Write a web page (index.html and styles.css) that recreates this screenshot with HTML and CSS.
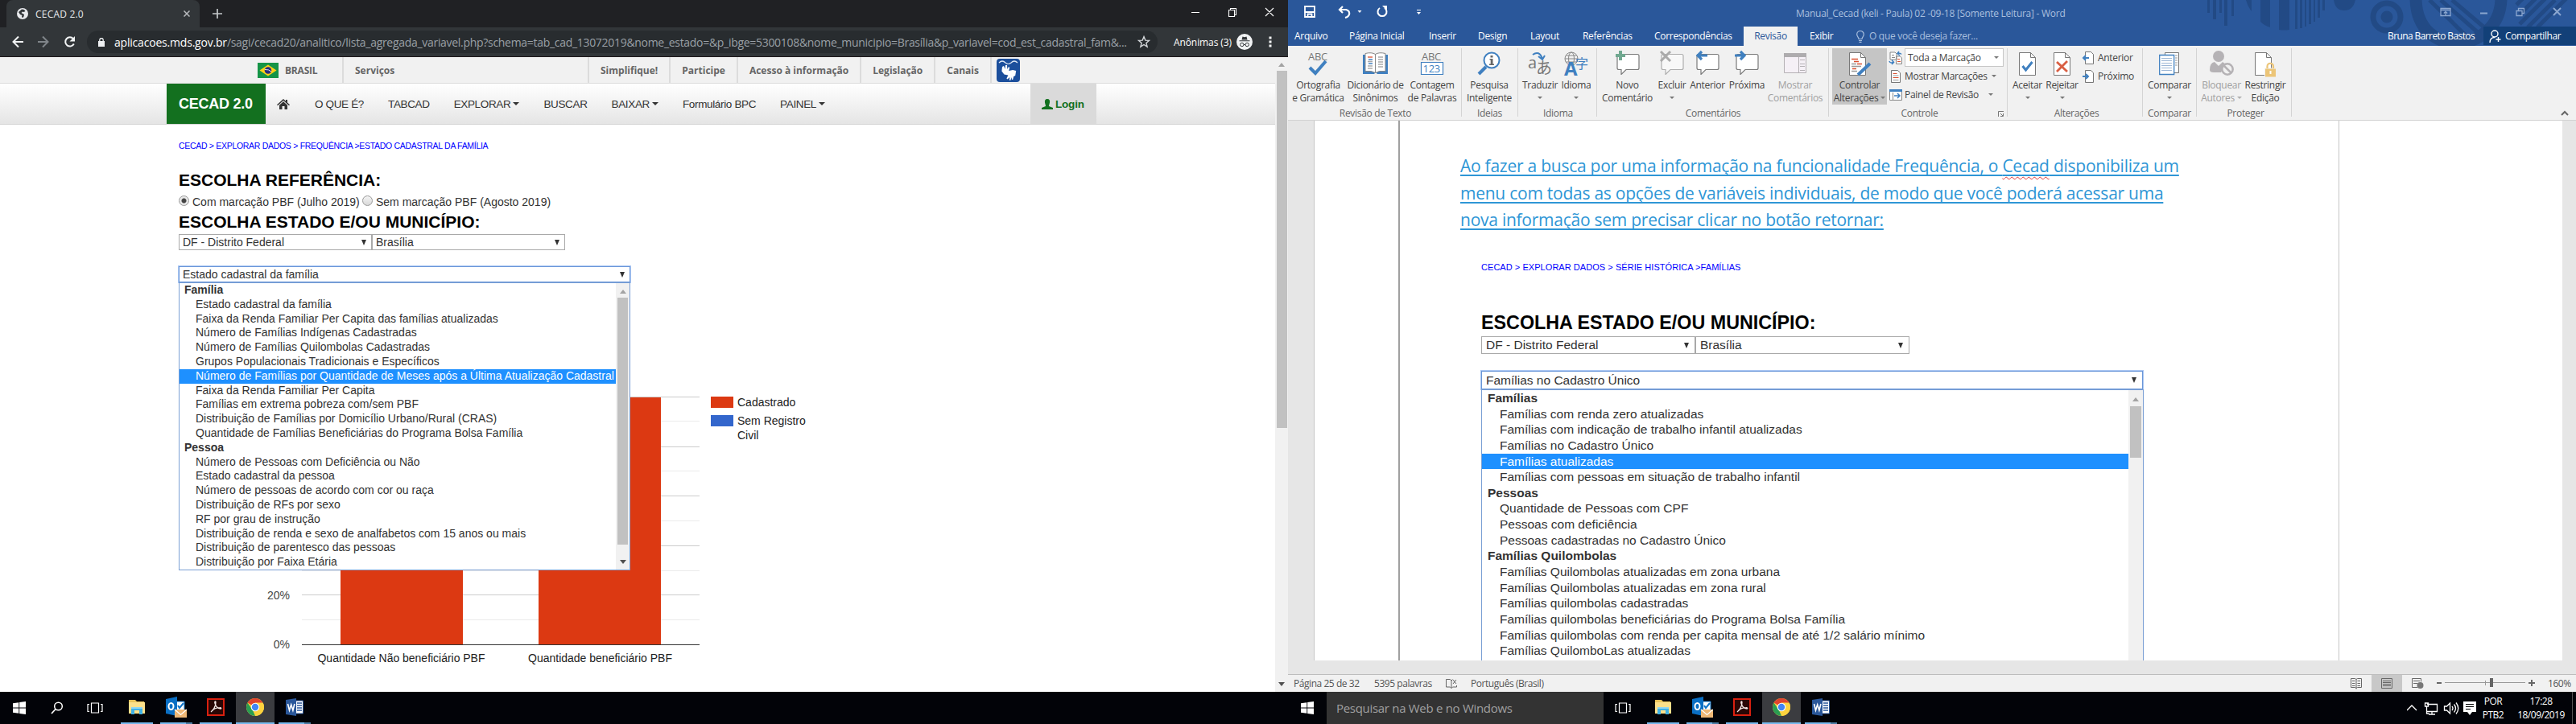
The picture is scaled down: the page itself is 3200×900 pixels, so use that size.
FILE: index.html
```html
<!DOCTYPE html>
<html lang="pt-BR">
<head>
<meta charset="utf-8">
<title>CECAD 2.0</title>
<link rel="stylesheet" href="styles.css">
</head>
<body>
<svg class="defs" width="0" height="0">
  <symbol id="i-win" viewBox="0 0 16 16"><path fill="#fff" d="M0 2.3 7.3 1.2V7.6H0zM8.2 1.1 16 0v7.6H8.2zM0 8.4h7.3v6.4L0 13.7zM8.2 8.4H16V16l-7.8-1.1z"/></symbol>
  <symbol id="i-task" viewBox="0 0 20 14"><path fill="none" stroke="#fff" stroke-width="1.2" d="M5.5 1h9v12h-9zM3 2.5H1v9h2M17 2.5h2v9h-2"/></symbol>
  <symbol id="i-folder" viewBox="0 0 22 20"><path fill="#e8c35a" d="M1 1h8l2 2h9v15H1z"/><path fill="#fbe08b" d="M1 4h20v14H1z"/><path fill="#3fb1e6" d="M4 10h14v9h-4v-5H8v5H4z"/><path fill="#8ed5f2" d="M4 10h14v2H4z"/></symbol>
  <symbol id="i-outlook" viewBox="0 0 26 26"><path fill="#fff" stroke="#0f74c8" d="M12 6h11v12H12z"/><path fill="none" stroke="#0f74c8" stroke-width="2" d="m15 11 2 3 5-6"/><path fill="#0a6fc4" d="M0 3 14 0v24L0 21z"/><ellipse cx="6.5" cy="12" rx="3" ry="4" fill="none" stroke="#fff" stroke-width="2"/><path fill="#efb876" d="M11 16h15v10H11z"/><path fill="none" stroke="#fff" stroke-width="1.2" d="m11 16 7.500 6.500L26 16"/></symbol>
  <symbol id="i-pdf" viewBox="0 0 22 22"><path fill="#2a0705" stroke="#d9200f" stroke-width="2" d="M1 1h20v20H1z"/><path fill="none" stroke="#f4e8e6" stroke-width="1.300" d="M5 17c3-2 6-7 6-12 0-1.500-1.500-1.500-1.200.5C10.500 9 13 13 17 13c1.500-.2.500-1.500-1-1.300-3 0-7 1.300-9.500 3.500"/></symbol>
  <symbol id="i-chrome" viewBox="0 0 22 22"><circle cx="11" cy="11" r="11" fill="#fdd23e"/><path fill="#e0442f" d="M11 11 1.500 5.500A11 11 0 0 1 20.500 5.500H11z"/><path fill="#2a9d52" d="M1.500 5.500 8 15l3 7A11 11 0 0 1 1.500 5.500z"/><path fill="#fdd23e" d="M11 22l5-8.500V6h4.800A11 11 0 0 1 11 22z"/><circle cx="11" cy="11" r="5.300" fill="#fff"/><circle cx="11" cy="11" r="4.200" fill="#4285f4"/></symbol>
  <symbol id="i-word" viewBox="0 0 22 22"><path fill="#fff" stroke="#2a579a" d="M12 3h9.500v16H12z"/><path stroke="#2a579a" stroke-width="1.300" d="M14 6h6M14 9h6M14 12h6M14 15h6"/><path fill="#2a579a" d="M0 2 13 0v22L0 20z"/><path fill="none" stroke="#fff" stroke-width="1.600" d="m2.500 7 2 8 2.200-7 2.200 7 2-8"/></symbol>
  <symbol id="i-page" viewBox="0 0 22 30"><path fill="#fff" stroke="#777" d="M.5.500h14l6 6v22H.5z"/><path fill="none" stroke="#777" d="M14.500.500v6h6"/></symbol>
  <symbol id="i-bubble" viewBox="0 0 30 30"><path fill="#fff" stroke="#7a7a7a" stroke-width="1.200" d="M4 4.500h23q2 0 2 2v15q0 2-2 2H13l-6 6v-6H4q-2 0-2-2v-15q0-2 2-2z"/></symbol>
</svg>

<div class="screen">
  <div class="tabs">
    <div class="tab">
      <svg width="14" height="14" viewBox="0 0 14 14"><circle cx="7" cy="7" r="7" fill="#e8eaed"/><path fill="#323639" d="M6 1.500 9 2l1.500 2-2 1L7 4.500 5.500 6 9 8l-.5 2.500L7 12.500 6 10.500 6.500 9 4 8 2 5z"/></svg>
      <span class="tab-title">CECAD 2.0</span>
      <svg width="8" height="8" viewBox="0 0 8 8"><path stroke="#b8bbbe" stroke-width="1.500" d="m.5.500 7 7m0-7-7 7"/></svg>
    </div>
    <svg class="plus" width="12" height="12" viewBox="0 0 12 12"><path stroke="#c4c7ca" stroke-width="1.700" d="M6 0v12M0 6h12"/></svg>
    <svg class="winctl" width="104" height="12" viewBox="0 0 104 12"><path fill="none" stroke="#fff" stroke-width="1.100" d="M0 6.500h10M46.500 3.500h7v8h-7zM48.500 3.500v-2h7v8h-2M92 1l10 10m0-10L92 11"/></svg>
  </div>
  <div class="toolbar">
    <svg class="navbtns" width="80" height="16" viewBox="0 0 80 16"><path fill="none" stroke="#f1f3f4" stroke-width="2" d="M14 8H1.500M8 1.500 1.500 8 8 14.500"/><path fill="none" stroke="#80858a" stroke-width="2" d="M32 8h12.500M38 1.500 44.500 8 38 14.500"/><path fill="none" stroke="#f1f3f4" stroke-width="2" d="M76 4.200A5.600 5.600 0 1 0 76.800 10.500"/><path fill="#f1f3f4" d="M78 1v6.500h-6.500z"/></svg>
    <div class="omnibox">
      <svg width="8" height="11" viewBox="0 0 8 11"><path fill="#eef0f2" d="M0 4h8v7H0z"/><path fill="none" stroke="#eef0f2" stroke-width="1.300" d="M1.800 5V2.700a2.200 2.200 0 0 1 4.400 0V5"/></svg>
      <span class="url"><b>aplicacoes.mds.gov.br</b><i>/sagi/cecad20/analitico/lista_agregada_variavel.php?schema=tab_cad_13072019&amp;nome_estado=&amp;p_ibge=5300108&amp;nome_municipio=Brasília&amp;p_variavel=cod_est_cadastral_fam&amp;...</i></span>
      <svg width="16" height="16" viewBox="0 0 16 16"><path fill="none" stroke="#d5d8db" stroke-width="1.400" d="m8 1.600 1.800 4.500 4.700.3-3.600 3 1.200 4.700L8 11.500l-4.100 2.600 1.200-4.700-3.600-3 4.700-.3z"/></svg>
    </div>
    <span class="anon">Anônimas (3)</span>
    <svg class="incog" width="20" height="20" viewBox="0 0 20 20"><circle cx="10" cy="10" r="10" fill="#f1f3f4"/><path fill="#323639" d="M6.500 7.500 7.500 3.500l2.500.7 2.500-.7 1 4zM3.500 8.300h13v1h-13z"/><path fill="none" stroke="#323639" d="M9 13.500h2"/><circle cx="6.800" cy="13.500" r="2.200" fill="none" stroke="#323639"/><circle cx="13.200" cy="13.500" r="2.200" fill="none" stroke="#323639"/></svg>
    <svg width="4" height="14" viewBox="0 0 4 14"><path fill="#f1f3f4" d="M.5.500h3v3h-3zM.5 5.500h3v3h-3zM.5 10.500h3v3h-3z"/></svg>
  </div>

  <div class="viewport">
    <div class="site">
      <div class="govbar">
        <span class="brasil"><svg width="26" height="19" viewBox="0 0 26 19"><path fill="#159447" d="M0 0h26v19H0z"/><path fill="#fdd216" d="m13 2.500 10.500 7L13 16.500 2.500 9.500z"/><circle cx="13" cy="9.500" r="4.300" fill="#2b2d7c"/><path fill="none" stroke="#dfe5f0" d="M9 8.500q5-.5 8 2.500"/></svg>BRASIL</span>
        <span class="servicos">Serviços</span>
        <span>Simplifique!</span><span>Participe</span><span>Acesso à informação</span><span>Legislação</span><span>Canais</span>
        <svg class="libras" width="29" height="29" viewBox="0 0 29 29"><rect width="29" height="29" rx="4" fill="#1c4f9c"/><path fill="none" stroke="#dfe8f5" stroke-width="1.200" d="M3 5q4-4 8 0 3.500 3 7 0 4-4 8 0"/><path fill="#fff" d="m7 10 2-1 1.500 4L11 8h2l.3 5 1.700-3 1.200 1-1 4 5-1 4 1-1 6-2 1-1 4h-1.300l-.2-3-1.500 4-1.400-.5.6-3.500-3 2.500-1-1 2-4-5-1-3-4z"/></svg>
      </div>
      <nav class="nav">
        <b class="brand">CECAD 2.0</b>
        <svg class="home" width="16" height="13" viewBox="0 0 16 13"><path fill="#333" d="m8 0 3 2.700V1h2v3.600L16 7.300l-1 1-7-6.300-7 6.300-1-1z"/><path fill="#333" d="m8 3.200 5 4.500V13H9.500V9h-3v4H3V7.700z"/></svg>
        <a>O QUE É?</a><a>TABCAD</a><a>EXPLORAR<i class="caret"></i></a><a>BUSCAR</a><a>BAIXAR<i class="caret"></i></a><a>Formulário BPC</a><a>PAINEL<i class="caret"></i></a>
        <b class="login"><svg width="14" height="13" viewBox="0 0 14 13"><path fill="#11701f" d="M7 0c2.500 0 3.500 2 3 4.500S9 8 9 9l5 2v2H0v-2l5-2c0-1-.5-2-1-4.500S4.500 0 7 0z"/></svg>Login</b>
      </nav>
      <main class="content">
        <p class="crumb">CECAD &gt; EXPLORAR DADOS &gt; FREQUÊNCIA &gt;ESTADO CADASTRAL DA FAMÍLIA</p>
        <h2 class="h-ref">ESCOLHA REFERÊNCIA:</h2>
        <div class="radios"><i class="radio on"></i><span class="r1">Com marcação PBF (Julho 2019)</span><i class="radio"></i><span>Sem marcação PBF (Agosto 2019)</span></div>
        <h2 class="h-est">ESCOLHA ESTADO E/OU MUNICÍPIO:</h2>
        <div class="selects"><div class="select">DF - Distrito Federal<i></i></div><div class="select">Brasília<i></i></div></div>
        <div class="combo">
          <div class="select focus">Estado cadastral da família<i></i></div>
          <div class="options">
            <ul>
              <li class="grp">Família</li>
              <li>Estado cadastral da família</li>
              <li>Faixa da Renda Familiar Per Capita das famílias atualizadas</li>
              <li>Número de Famílias Indígenas Cadastradas</li>
              <li>Número de Famílias Quilombolas Cadastradas</li>
              <li>Grupos Populacionais Tradicionais e Específicos</li>
              <li class="sel">Número de Famílias por Quantidade de Meses após a Última Atualização Cadastral</li>
              <li>Faixa da Renda Familiar Per Capita</li>
              <li>Famílias em extrema pobreza com/sem PBF</li>
              <li>Distribuição de Famílias por Domicílio Urbano/Rural (CRAS)</li>
              <li>Quantidade de Famílias Beneficiárias do Programa Bolsa Família</li>
              <li class="grp">Pessoa</li>
              <li>Número de Pessoas com Deficiência ou Não</li>
              <li>Estado cadastral da pessoa</li>
              <li>Número de pessoas de acordo com cor ou raça</li>
              <li>Distribuição de RFs por sexo</li>
              <li>RF por grau de instrução</li>
              <li>Distribuição de renda e sexo de analfabetos com 15 anos ou mais</li>
              <li>Distribuição de parentesco das pessoas</li>
              <li>Distribuição por Faixa Etária</li>
            </ul>
            <div class="sb"><i class="up"></i><b></b><i class="down"></i></div>
          </div>
        </div>
        <svg class="chart" width="820" height="360" viewBox="0 0 820 360">
          <path stroke="#ebebeb" d="M153 43.500h494M153 105.500h494M153 167.500h494M153 229.500h494M153 290.500h494"/>
          <path stroke="#ccc" d="M153 13.500h494M153 75.500h494M153 136.500h494M153 198.500h494M153 259.500h494"/>
          <path fill="#dc3912" d="M201 14h152v307H201zM447 14h152v307H447z"/>
          <path stroke="#333" d="M153 321.500h494"/>
          <g fill="#444" text-anchor="end"><text x="138" y="265">20%</text><text x="138" y="326">0%</text></g>
          <g fill="#222"><g text-anchor="middle"><text x="276.500" y="343" textLength="208">Quantidade Não beneficiário PBF</text><text x="523.500" y="343" textLength="179">Quantidade beneficiário PBF</text></g>
          <text x="694" y="25">Cadastrado</text><text x="694" y="48">Sem Registro</text><text x="694" y="66">Civil</text></g>
          <path fill="#dc3912" d="M661 13h28v14h-28z"/><path fill="#36c" d="M661 36h28v14h-28z"/>
        </svg>
      </main>
    </div>
    <div class="sb page-sb"><i class="up"></i><b></b><i class="down"></i></div>
  </div>

  <div class="taskbar">
    <span class="cell"><svg width="16" height="16"><use href="#i-win"/></svg></span>
    <span class="cell"><svg width="16" height="16" viewBox="0 0 16 16"><circle cx="9.500" cy="6" r="4.800" fill="none" stroke="#fff" stroke-width="1.500"/><path stroke="#fff" stroke-width="1.700" d="m6 9.500-5 5.500"/></svg></span>
    <span class="cell"><svg width="20" height="14"><use href="#i-task"/></svg></span>
    <div class="apps">
      <span class="app"><svg width="22" height="20"><use href="#i-folder"/></svg></span>
      <span class="app multi"><svg width="26" height="26"><use href="#i-outlook"/></svg></span>
      <span class="app"><svg width="22" height="22"><use href="#i-pdf"/></svg></span>
      <span class="app active"><svg width="22" height="22"><use href="#i-chrome"/></svg></span>
      <span class="app multi"><svg width="22" height="22"><use href="#i-word"/></svg></span>
    </div>
  </div>
</div>

<div class="screen word">
  <header class="title">
    <svg class="art" width="500" height="57" viewBox="0 0 500 57"><g fill="#224a85"><path d="M42 0h3v16h-3zM49 0h4v24h-4zM57 0h3v16h-3zM63 0h4v32h-4zM72 0h3v20h-3zM90 0h7v14q-5-6-7-14zM108 0h12v34q-7-2-12-7zM131 0h13v37q-7 1-13 0zM151 0h3v36h-3zM157 0h3v35h-3zM163 0h2v33h-2zM168 0h3v30h-3zM174 0h2v27h-2zM179 0h3v22h-3zM185 0h3v13h-3z"/><path d="M199 0h27q-3 13-14 13T199 0z"/><circle cx="265" cy="21" r="7.500"/></g><circle cx="265" cy="21" r="17" fill="none" stroke="#224a85" stroke-width="7"/><path fill="none" stroke="#224a85" stroke-width="15" d="M301-3c0 80 106 70 106 0"/><g stroke="#224a85" stroke-width="5"><path d="m318 0 51 50M332 0l48 42M346 0l40 34M426 6l8-8M430 18l20-20M430 30l32-32M440 34l34-34M452 34l36-36"/></g></svg>
    <div class="tl">
      <svg class="qat" width="150" height="16" viewBox="0 0 150 16"><path fill="none" stroke="#fff" stroke-width="1.800" d="M1 1h12v13H1zM1 8h12M4.500 14v-3.500h5V14"/><path fill="none" stroke="#fff" stroke-width="2.200" d="m48 1-4 4 4 4M44 5h8q5 1 4 6-1 3-5 4"/><path fill="#fff" d="M66.500 6h5L69 9z"/><path fill="none" stroke="#fff" stroke-width="2" d="M94 3a5.500 5.500 0 1 0 6 0"/><path fill="#fff" d="M97 0h6v6z"/><path fill="#fff" d="M140 5h5v1h-5zM140 8h5l-2.500 3z"/></svg>
      <span class="doc-title">Manual_Cecad (keli - Paula) 02 -09-18 [Somente Leitura] - Word</span>
      <svg class="wctl" width="152" height="12" viewBox="0 0 152 12"><g fill="none" stroke="#8ba6cf" stroke-width="1.300"><path d="M1 1.500h12v9H1zM1 3.500h12M7 10V5.500M4.800 7.500 7 5.300l2.200 2.200"/><path stroke-width="2" d="M50 7.500h9"/><path d="M95 4.500h7v6h-7zM97.500 4V1.500h7v6h-2"/><path stroke-width="2" d="m141 1 9 9m0-9-9 9"/></g></svg>
    </div>
    <div class="tabrow">
      <span class="t1">Arquivo</span><span class="t2">Página Inicial</span><span class="t3">Inserir</span><span class="t4">Design</span><span class="t5">Layout</span><span class="t6">Referências</span><span class="t7">Correspondências</span><b class="t8">Revisão</b><span class="t9">Exibir</span>
      <span class="tell"><svg width="10" height="15" viewBox="0 0 10 15"><path fill="none" stroke="#a9bfde" stroke-width="1.200" d="M3 10.500C3 8 .7 7.500.7 4.800a4.300 4.300 0 0 1 8.600 0C9.300 7.500 7 8 7 10.500zM3 12.500h4M3.500 14.300h3"/></svg>O que você deseja fazer...</span>
      <span class="user">Bruna Barreto Bastos</span>
      <span class="share"><svg width="16" height="16" viewBox="0 0 16 16"><g fill="none" stroke="#fff" stroke-width="1.400"><circle cx="7" cy="5" r="4"/><path d="M1 16c0-4 2-6.500 6-6.500M11.500 9v6M8.500 12h6"/></g></svg>Compartilhar</span>
    </div>
  </header>

  <div class="ribbon">
    <section class="g1"><div class="tools">
      <div class="btn w71"><svg width="30" height="32" viewBox="0 0 30 32"><text x="2" y="12" class="abc">ABC</text><path fill="none" stroke="#4080c0" stroke-width="4" d="m4 21 7 7L24 13"/></svg>Ortografia<br>e Gramática</div>
      <div class="btn w71"><svg width="32" height="32" viewBox="0 0 32 32"><path fill="#4080c0" d="M0 5h31v24H18l-2-2-2 2H0z"/><path fill="#fff" stroke="#888" d="M3 3.500q8-2 12.500 1 4.500-3 12.500-1v22q-8-1-12.500 2Q11 24.500 3 25.500zM15.500 4v23"/><path stroke="#d95030" stroke-width="1.300" d="M6 8h6"/><path stroke="#4080c0" stroke-width="1.300" d="M7 11h5M7 16h5"/><path stroke="#aaa" stroke-width="1.300" d="M6 13.500h6M6 19h6M6 22h6M19 8h6M19 11h6M19 14h6M19 17h6M19 20h6"/></svg>Dicionário de<br>Sinônimos</div>
      <div class="btn w70"><svg width="30" height="32" viewBox="0 0 30 32"><text x="2" y="12" class="abc">ABC</text><path fill="#fff" stroke="#4080c0" stroke-width="1.200" d="M1.500 14.500h27v15h-27z"/><text x="3.500" y="27" class="n123">123</text></svg>Contagem<br>de Palavras</div>
    </div><h4>Revisão de Texto</h4></section>
    <section class="g2"><div class="tools">
      <div class="btn w68"><svg width="30" height="32" viewBox="0 0 30 32"><path stroke="#4080c0" stroke-width="4" d="m2 29 9-9"/><circle cx="18" cy="12" r="9.500" fill="#fff" stroke="#4080c0" stroke-width="2"/><path fill="#666" d="M16.500 6h3v2.500h-3zM15.500 10h4v6.500h1.500v1.500h-6v-1.500h1.700v-5h-1.200z"/></svg>Pesquisa<br>Inteligente</div>
    </div><h4>Ideias</h4></section>
    <section class="g3"><div class="tools">
      <div class="btn w50"><svg width="30" height="32" viewBox="0 0 30 32"><text x="0" y="22" font-size="20" fill="#777">a</text><text x="10" y="29" class="cjk" font-size="20" fill="#777">あ</text><path fill="none" stroke="#4080c0" stroke-width="2" d="M6 5q8-6 12 5M13 7l5 4 3-5"/></svg>Traduzir<br><i class="dd"></i></div>
      <div class="btn w40"><svg width="32" height="32" viewBox="0 0 32 32"><g fill="none" stroke="#888"><circle cx="10" cy="10" r="8"/><ellipse cx="10" cy="10" rx="3.500" ry="8"/><path d="M2 10h16M3.500 6h13M3.500 14h13"/></g><text x="1" y="31" font-size="24" font-weight="bold" fill="#4080c0">A</text><text x="15" y="22" class="cjk" font-size="16" fill="#4080c0">字</text></svg>Idioma<br><i class="dd"></i></div>
    </div><h4>Idioma</h4></section>
    <section class="g4"><div class="tools">
      <div class="btn w73"><svg width="30" height="32"><use href="#i-bubble" width="30" height="30"/><path stroke="#70a890" stroke-width="4" d="M6 0v12M0 6h12"/></svg>Novo<br>Comentário</div>
      <div class="btn w38"><svg width="30" height="32"><g opacity=".55"><use href="#i-bubble" width="30" height="30"/></g><path stroke="#aaa" stroke-width="3" d="m1 1 12 12M13 1 1 13"/></svg>Excluir<br><i class="dd"></i></div>
      <div class="btn w50"><svg width="30" height="32"><use href="#i-bubble" width="30" height="30"/><path fill="none" stroke="#4080c0" stroke-width="3.200" d="M15 6H3M8 1 3 6l5 5"/></svg>Anterior</div>
      <div class="btn w48"><svg width="30" height="32"><use href="#i-bubble" width="30" height="30"/><path fill="none" stroke="#4080c0" stroke-width="3.200" d="M0 6h11M7 1l5 5-5 5"/></svg>Próxima</div>
      <div class="btn w72 off"><svg width="28" height="32" viewBox="0 0 28 32"><path fill="#f5f0f6" stroke="#b4b0b4" d="M.5 3.500h27v24H.5z"/><path fill="#aeacae" d="M0 3h28v5H0z"/><path stroke="#b4b0b4" d="M18.500 8v20M20 11.500h6M20 16.500h6M20 19.500h6M20 24.500h6"/></svg>Mostrar<br>Comentários</div>
    </div><h4>Comentários</h4></section>
    <section class="g5"><div class="tools">
      <div class="btn w68 pressed"><svg width="30" height="32" viewBox="-2 -2 30 32"><use href="#i-page" width="22" height="30"/><path stroke="#d95030" stroke-width="1.300" d="M3 8.500h8M6 11.500h6M10 14.500h6M4 20.500h5"/><path stroke="#999" stroke-width="1.300" d="M3 14.500h6M3 17.500h12M3 23.500h7"/><path stroke="#4080c0" stroke-width="4" d="M11 28 26 14"/></svg>Controlar<br>Alterações <i class="dd"></i></div>
      <div class="col">
        <div class="row"><svg width="16" height="16" viewBox="0 0 16 16"><path fill="#fff" stroke="#888" d="M1 1h6l2 2v7H1zM8.500 6h5l2 2v7.500h-7z"/><path stroke="#d95030" d="M10 9.500h3M10 12.500h4"/><path stroke="#888" d="M3 4.500h3M3 7.500h4"/><path fill="none" stroke="#4080c0" stroke-width="1.500" d="M15 3.500q-1-2-5-1M12 0l-2 2.500L13 5M0 12q1 3 5 1.500M3 10.500l2.500 3L3 16"/></svg><span class="dropbox">Toda a Marcação<i class="dd"></i></span></div>
        <div class="row"><svg width="16" height="16" viewBox="0 0 16 16"><path fill="#fff" stroke="#777" d="M2.500.500h8l3 3v12h-11z"/><path stroke="#d95030" d="M4.500 4.500h5M4.500 9.500h7"/><path stroke="#999" d="M4.500 7h7M4.500 12.500h7"/></svg>Mostrar Marcações<i class="dd m1"></i></div>
        <div class="row"><svg width="16" height="16" viewBox="0 0 16 16"><path fill="#fff" stroke="#888" d="M.5 1.500h15v13H.5z"/><path fill="#4080c0" d="M0 1h16v3H0z"/><path fill="none" stroke="#4080c0" stroke-width="1.500" d="M6 9h7M10 6l3 3-3 3"/><path stroke="#888" d="M4.500 5v9"/></svg>Painel de Revisão<i class="dd m2"></i></div>
      </div>
    </div><h4>Controle<svg class="launch" width="7" height="7" viewBox="0 0 7 7"><path fill="none" stroke="#777" d="M.5 7V.500H7M3 3l3 3M6.500 3v3.500H3"/></svg></h4></section>
    <section class="g6"><div class="tools">
      <div class="btn w41"><svg width="22" height="32" viewBox="0 -2 22 32"><use href="#i-page" width="22" height="30"/><path fill="none" stroke="#4080c0" stroke-width="3" d="m4.500 17 4 5 8-10"/></svg>Aceitar<br><i class="dd"></i></div>
      <div class="btn w45"><svg width="22" height="32" viewBox="0 -2 22 32"><use href="#i-page" width="22" height="30"/><path stroke="#d95e42" stroke-width="2.800" d="m4 12 13 12M17 11 4 24"/></svg>Rejeitar<br><i class="dd"></i></div>
      <div class="col nav-ch">
        <div class="row"><svg width="16" height="16" viewBox="0 0 16 16"><path fill="#fff" stroke="#777" d="M3.500.500h7l3 3v12h-10z"/><path fill="none" stroke="#4080c0" stroke-width="2" d="M8 8H1M4 5 1 8l3 3"/></svg>Anterior</div>
        <div class="row"><svg width="16" height="16" viewBox="0 0 16 16"><path fill="#fff" stroke="#777" d="M3.500.500h7l3 3v12h-10z"/><path fill="none" stroke="#4080c0" stroke-width="2" d="M0 8h7M4 5l3 3-3 3"/></svg>Próximo</div>
      </div>
    </div><h4>Alterações</h4></section>
    <section class="g7"><div class="tools">
      <div class="btn w64"><svg width="26" height="32" viewBox="0 0 26 32"><path fill="#fff" stroke="#777" d="M7.500 2.500h17v25h-17z"/><path stroke="#999" d="M20 6h3M20 9h3M20 12h3M20 15h3M20 18h3"/><path fill="#fff" stroke="#4080c0" stroke-width="1.300" d="M.7 5.500h18v24H.7z"/><path stroke="#9db7d6" d="M3 9.500h13M3 12.500h13M3 15.500h13M3 18.500h13M3 21.500h13M3 24.500h13"/></svg>Comparar<br><i class="dd"></i></div>
    </div><h4>Comparar</h4></section>
    <section class="g8"><div class="tools">
      <div class="btn w53 off"><svg width="30" height="32" viewBox="0 0 30 32"><circle cx="11" cy="7" r="7" fill="#b5b2b5"/><path fill="#b5b2b5" d="M0 24q0-9 6-10l5 5 5-5 4 3-6 10H5q-5 0-5-3z"/><circle cx="22" cy="23" r="6.700" fill="#f1f1f1" stroke="#b5b2b5" stroke-width="2.500"/><path stroke="#b5b2b5" stroke-width="2.500" d="m17 18 10 10"/></svg>Bloquear<br>Autores <i class="dd"></i></div>
      <div class="btn w56"><svg width="28" height="32" viewBox="-1 -2 28 32"><use href="#i-page" width="22" height="30"/><path fill="#ecc578" stroke="#f1f1f1" d="M12.500 20h14v11h-14z"/><path fill="none" stroke="#ecc578" stroke-width="2.200" d="M15.500 20v-2.500a3.700 3.700 0 0 1 7.500 0V20"/><path stroke="#fff" stroke-width="2" d="M19.500 23v4"/></svg>Restringir<br>Edição</div>
    </div><h4>Proteger</h4></section>
    <svg class="collapse" width="10" height="7" viewBox="0 0 10 7"><path fill="none" stroke="#666" stroke-width="2" d="m1 6 4-4 4 4"/></svg>
  </div>

  <div class="desk">
    <div class="paper">
      <div class="body">
        <p class="intro">Ao fazer a busca por uma informação na funcionalidade Frequência, o <span class="typo">Cecad</span> disponibiliza um<br>menu com todas as opções de variáveis individuais, de modo que você poderá acessar uma<br>nova informação sem precisar clicar no botão retornar:</p>
        <div class="shot">
          <p class="crumb">CECAD &gt; EXPLORAR DADOS &gt; SÉRIE HISTÓRICA &gt;FAMÍLIAS</p>
          <h2>ESCOLHA ESTADO E/OU MUNICÍPIO:</h2>
          <div class="selects"><div class="select">DF - Distrito Federal<i></i></div><div class="select">Brasília<i></i></div></div>
          <div class="select focus">Famílias no Cadastro Único<i></i></div>
          <div class="options">
            <ul>
              <li class="grp">Famílias</li>
              <li>Famílias com renda zero atualizadas</li>
              <li>Famílias com indicação de trabalho infantil atualizadas</li>
              <li>Famílias no Cadastro Único</li>
              <li class="sel">Famílias atualizadas</li>
              <li>Famílias com pessoas em situação de trabalho infantil</li>
              <li class="grp">Pessoas</li>
              <li>Quantidade de Pessoas com CPF</li>
              <li>Pessoas com deficiência</li>
              <li>Pessoas cadastradas no Cadastro Único</li>
              <li class="grp">Famílias Quilombolas</li>
              <li>Famílias Quilombolas atualizadas em zona urbana</li>
              <li>Famílias Quilombolas atualizadas em zona rural</li>
              <li>Famílias quilombolas cadastradas</li>
              <li>Famílias quilombolas beneficiárias do Programa Bolsa Família</li>
              <li>Famílias quilombolas com renda per capita mensal de até 1/2 salário mínimo</li>
              <li>Famílias QuilomboLas atualizadas</li>
            </ul>
            <div class="sb"><i class="up"></i><b></b></div>
          </div>
        </div>
      </div>
    </div>
  </div>

  <footer class="status">
    <span class="s1">Página 25 de 32</span><span class="s2">5395 palavras</span>
    <svg class="s3" width="14" height="13" viewBox="0 0 14 13"><path fill="none" stroke="#666" d="M7 12.500 5.500 11H.5V1.500h5L7 3l1.500-1.500M7 3v9.500L8.500 11h5V9M9 2l4 5m0-5L9 7"/></svg>
    <span class="s4">Português (Brasil)</span>
    <svg class="views" width="140" height="21" viewBox="0 0 140 21"><path fill="#c8c8c8" d="M36 0h38v21H36z"/><g fill="none" stroke="#666"><path d="M10.500 4.500h5l1.500 1 1.500-1h5v11h-5l-1.500 1-1.500-1h-5zM17 5.500v12M12 7.500h3.500M12 10.500h3.500M12 13.500h3.500M18.500 7.500H22M18.500 10.500H22M18.500 13.500H22"/><path d="M48.500 4.500h13v12h-13zM50 7.500h10M50 9.500h10M50 11.500h10M50 13.500h10"/><path d="M93 15.500h-6.500v-11h11v4M88 7.500h8M88 10.500h5"/></g><circle cx="96.500" cy="13" r="4" fill="#777"/><path stroke="#666" stroke-width="2" d="M117 10h6"/></svg>
    <svg class="zoomer" width="114" height="21" viewBox="0 0 114 21"><path stroke="#999" d="M1 9.500h100M51.500 7v6"/><path fill="#666" d="M57 4h4v11h-4z"/><path stroke="#666" stroke-width="2" d="M105 10h8M109 6v8"/></svg>
    <span class="pct">160%</span>
  </footer>

  <div class="taskbar">
    <span class="cell"><svg width="16" height="16"><use href="#i-win"/></svg></span>
    <span class="search">Pesquisar na Web e no Windows</span>
    <span class="cell tv"><svg width="20" height="14"><use href="#i-task"/></svg></span>
    <div class="apps">
      <span class="app"><svg width="22" height="20"><use href="#i-folder"/></svg></span>
      <span class="app multi"><svg width="26" height="26"><use href="#i-outlook"/></svg></span>
      <span class="app"><svg width="22" height="22"><use href="#i-pdf"/></svg></span>
      <span class="app active"><svg width="22" height="22"><use href="#i-chrome"/></svg></span>
      <span class="app multi"><svg width="22" height="22"><use href="#i-word"/></svg></span>
    </div>
    <div class="tray">
      <svg width="86" height="18" viewBox="0 0 86 18"><g fill="none" stroke="#fff" stroke-width="1.300"><path d="m0 12 6-6 6 6M25 4.500h12.500v9H25M31 13.500V17M27 17h8M22.500 3h4v4h-4zM24.500 7v9h3"/><path d="M46.500 7h3l4-4v13l-4-4h-3zM56 7q2 2.500 0 5M58.500 4.500q4 5 0 10M61 2.500q5.500 7 0 14"/></g><path fill="#fff" d="M70 1h16v13h-5l-3 4-3-4h-5z"/><path stroke="#000" d="M73 4.500h10M73 7.500h10M73 10.500h6"/></svg>
      <span class="lang">POR<br>PTB2</span><span class="clock">17:28<br>18/09/2019</span>
    </div>
  </div>
</div>
</body>
</html>
```
FILE: styles.css
```css
* { box-sizing: border-box; }
body, h2, h4, p, ul { margin: 0; padding: 0; }
ul { list-style: none; }
i { font-style: normal; }
svg { display: block; flex: none; }
body {
  display: flex;
  width: 3200px;
  height: 900px;
  overflow: hidden;
  background: #fff;
  white-space: nowrap;
  font-family: "Liberation Sans", Arial, sans-serif;
}
.defs { position: absolute; }
.screen { width: 1600px; height: 900px; display: flex; flex-direction: column; flex: none; }

/* browser chrome */
.tabs { height: 34px; background: #202124; display: flex; align-items: center; padding-left: 8px; color: #e8eaed; }
.tab { width: 240px; height: 34px; background: #323639; border-radius: 8px 8px 0 0; display: flex; align-items: center; padding: 0 12px 0 13px; }
.tab-title { flex: 1; padding-left: 9px; font: 12px "Open Sans", sans-serif; letter-spacing: .2px; }
.plus { margin-left: 16px; }
.winctl { margin: -5px 16px 0 auto; }
.toolbar { height: 37px; background: #323639; border-bottom: 1px solid #1d1719; display: flex; align-items: center; padding: 0 20px 0 15px; }
.navbtns { margin-right: 13px; }
.omnibox { width: 1330px; height: 28px; border-radius: 14px; background: #282c2f; display: flex; align-items: center; padding: 0 9px 0 14px; font: 14px "Open Sans", sans-serif; letter-spacing: -.3px; }
.url { flex: 1; padding-left: 12px; }
.url b { font-weight: 400; color: #fff; letter-spacing: -.2px; }
.url i { color: #9aa0a6; }
.anon { width: 98px; padding-left: 20px; color: #fff; font: 12px "Open Sans", sans-serif; letter-spacing: -.1px; }
.incog { margin-right: 20px; }

.viewport { height: 789px; display: flex; }
.site { width: 1584px; overflow: hidden; }
.sb { background: #f1f1f1; display: flex; flex-direction: column; align-items: center; }
.sb b { background: #c1c1c1; display: block; }
.sb i { border: 4px solid transparent; }
.sb .up { border-top: 0; border-bottom: 5px solid #a3a3a3; }
.sb .down { border-bottom: 0; border-top: 5px solid #505050; }
.page-sb { width: 16px; padding: 7px 0; }
.page-sb b { width: 13px; height: 444px; margin: 5px 0 auto; }

/* government bar */
.govbar { height: 33px; background: #f1f1f1; border-bottom: 1px solid #ddd; display: flex; align-items: center; padding-left: 320px; color: #666; font: bold 12px "Open Sans", sans-serif; letter-spacing: 0; }
.govbar span { height: 32px; display: flex; align-items: center; padding: 0 14px; border-right: 2px solid #dcdcdc; }
.govbar .brasil { width: 107px; padding: 0; gap: 8px; letter-spacing: -.2px; }
.govbar .servicos { width: 305px; }
.libras { margin-left: 6px; }

.nav { height: 51px; background: linear-gradient(#fff, #e5e5e5); border-bottom: 1px solid #d4d4d4; display: flex; align-items: center; padding-left: 207px; font-size: 13.500px; color: #333; }
.brand { width: 123px; height: 50px; line-height: 50px; padding-left: 15px; background: #13701f; color: #fff; font-size: 18px; letter-spacing: -.25px; }
.home { margin: 0 16px 0 14px; }
.nav a { padding: 0 15px; display: flex; align-items: center; letter-spacing: -.35px; }
.caret { border: 4px solid transparent; border-top-color: #333; border-bottom: 0; margin-left: 3px; }
.login { width: 82px; height: 50px; margin: 0 222px 0 auto; background: #dadada; color: #11701f; display: flex; align-items: center; padding-left: 14px; gap: 3px; letter-spacing: -.2px; }

/* form */
.content { padding: 16px 0 0 222px; color: #333; }
.crumb { height: 20px; line-height: 20px; color: #00f; font-size: 11px; }
.content .crumb { font-size: 10.500px; letter-spacing: -.3px; }
h2 { color: #000; font-weight: bold; font-size: 21px; height: 28px; line-height: 28px; }
.h-ref { margin-top: 19px; }
.h-est { margin-top: 1px; }
.radios { height: 20px; margin-top: 3px; display: flex; align-items: center; font-size: 14px; }
.radio { width: 13px; height: 13px; flex: none; border: 1px solid #999; border-radius: 50%; background: linear-gradient(#f4f4f4, #d8d8d8); margin: -3px 4px 0 0; }
.radio.on { background: radial-gradient(circle, #444 0 2.500px, #e8e8e8 3.500px); }
.r1 { width: 211px; }
.selects { display: flex; margin-top: 1px; }
.select { width: 240px; height: 20px; border: 1px solid #a9a9a9; background: #fff; display: flex; align-items: center; justify-content: space-between; padding: 0 6px 0 4px; font-size: 14px; color: #333; }
.select i { border: 3px solid transparent; border-top: 7px solid #333; border-bottom: 0; }
.combo { position: relative; margin-top: 20px; width: 561px; }
.select.focus { width: 100%; border-color: #6a96d8; box-shadow: 0 0 0 1px #a9c6f2; }
.options { border: 1px solid #7a9fd4; background: #fff; display: flex; }
.combo .options { position: absolute; left: 0; top: 20px; width: 561px; height: 358px; }
.options ul { flex: 1; font-size: 14px; }
.options li { height: 17.8px; line-height: 17.8px; padding-left: 20px; color: #333; }
.options .grp { padding-left: 6px; font-weight: bold; }
.options .sel { background: #1e90ff; color: #fff; }
.options .sb { width: 17px; padding: 8px 0 7px; justify-content: space-between; }
.combo .sb b { width: 13px; height: 307px; margin: 5px 0 auto; }
.chart { margin-top: 129px; font-size: 14px; }

/* taskbar */
.taskbar { height: 40px; background: #020308; display: flex; align-items: center; }
.cell { width: 47px; display: flex; justify-content: center; }
.apps { display: flex; margin-left: 9px; gap: 9px; }
.app { width: 40px; height: 40px; border-bottom: 2px solid #76b9ed; display: flex; align-items: center; justify-content: center; position: relative; }
.app.active { width: 48px; background: #3b3c40; margin: 0 -4px 0 -4px; }
.multi::after { content: ""; position: absolute; right: 0; bottom: -2px; width: 8px; height: 2px; background: #4c7ca3; }
.search { width: 344px; height: 40px; line-height: 41px; margin-left: 1px; padding-left: 12px; background: #333; color: #a0a0a0; font-family: "Open Sans", sans-serif; font-size: 15px; letter-spacing: -.3px; }
.tv { margin-right: -2px; }
.tray { margin-left: auto; display: flex; align-items: center; height: 40px; color: #fff; font: 12px/17px "Open Sans", sans-serif; letter-spacing: -.5px; text-align: center; border-right: 1px solid #555; margin-right: 4px; }
.lang { width: 42px; }
.clock { width: 77px; }

/* word: title and tabs */
.word { font-family: "Open Sans", "Noto Sans", sans-serif; font-size: 12px; letter-spacing: -.3px; }
.title { height: 57px; background: #2a579a; position: relative; color: #fff; }
.art { position: absolute; right: 0; top: 0; }
.tl { height: 33px; display: flex; position: relative; align-items: center; padding-left: 20px; }
.qat { margin-top: -3px; }
.doc-title { margin-left: 461px; color: #a9bfde; letter-spacing: -.26px; }
.wctl { margin: -3px 17px 0 auto; }
.tabrow { position: relative; height: 24px; line-height: 24px; display: flex; }
.t1 { width: 76px; padding-left: 8px; }
.t2 { width: 99px; }
.t3 { width: 61px; }
.t4 { width: 65px; }
.t5 { width: 65px; }
.t6 { width: 89px; }
.t7 { width: 111px; }
.t8 { width: 67px; background: #f1f1f1; color: #2a579a; text-align: center; font-weight: 400; }
.t9 { width: 73px; padding-left: 15px; }
.tell { display: flex; align-items: center; gap: 6px; color: #a9bfde; }
.user { margin-left: auto; width: 119px; letter-spacing: -.6px; }
.share { width: 115px; height: 23px; background: #124078; display: flex; align-items: center; gap: 4px; padding-left: 7px; letter-spacing: -.4px; }

/* ribbon */
.ribbon { height: 93px; background: #f1f1f1; border-bottom: 1px solid #d2d2d2; display: flex; padding-top: 3px; position: relative; color: #444; }
.ribbon section { height: 85px; border-right: 1px solid #d4d4d4; background: #f1f1f1; }
.tools { height: 70px; display: flex; }
.tools svg { overflow: visible; }
.btn { height: 70px; padding-top: 3px; text-align: center; line-height: 16px; }
.btn svg { margin: 0 auto 3px; text-align: left; }
.ribbon h4 { font-weight: 400; font-size: 12px; line-height: 22px; color: #666; text-align: center; position: relative; height: 15px; }
.off { color: #a0a0a0; }
.off .dd { border-top-color: #b0b0b0; }
.pressed { background: #c5c5c5; }
.dd { display: inline-block; border: 3px solid transparent; border-top-color: #777; border-bottom: 0; vertical-align: 3px; }
.abc { font-size: 13px; fill: #777; }
.n123 { font-size: 13px; fill: #4080c0; }
.cjk { font-family: "Noto Sans CJK JP", sans-serif; }
.g1 { width: 216px; padding-left: 2px; }
.g2 { width: 70px; }
.g3 { width: 98px; padding-left: 2px; }
.g4 { width: 288px; padding-left: 1px; }
.g5 { width: 222px; padding-left: 4px; }
.g6 { width: 168px; padding-left: 4px; }
.g7 { width: 67px; }
.g8 { width: 118px; padding-left: 4px; }
.w38 { width: 38px; } .w40 { width: 40px; } .w41 { width: 41px; } .w45 { width: 45px; } .w48 { width: 48px; }
.w50 { width: 50px; } .w53 { width: 53px; } .w56 { width: 56px; } .w64 { width: 66px; } .w68 { width: 68px; }
.w70 { width: 70px; } .w71 { width: 71px; } .w72 { width: 72px; } .w73 { width: 73px; }
.col { padding-left: 3px; }
.row { height: 23px; display: flex; align-items: center; gap: 3px; }
.dropbox { width: 123px; height: 23px; background: #fff; border: 1px solid #c6c6c6; display: flex; align-items: center; justify-content: space-between; padding: 0 5px 0 3px; }
.m1 { margin-left: 2px; }
.m2 { margin-left: 9px; }
.launch { position: absolute; right: 4px; top: 8px; }
.collapse { position: absolute; right: 9px; bottom: 5px; }

/* document */
.desk { height: 689px; background: #e6e6e6; border-bottom: 1px solid #bdbdbd; padding-left: 32px; }
.paper { width: 1551px; height: 671px; background: #fff; border-left: 1px solid #c6c6c6; padding-left: 104px; overflow: hidden; }
.body { width: 1169px; height: 671px; border-left: 2px solid #a0a0a0; border-right: 1px solid #c6c6c6; padding: 40px 0 0 75px; }
.intro { font-size: 21px; line-height: 33.500px; height: 100px; color: #2e96d6; letter-spacing: -.25px; text-decoration: underline; text-decoration-thickness: 2px; text-underline-offset: 3px; text-decoration-skip-ink: none; }
.typo { text-decoration: underline wavy #e03030 1px; text-underline-offset: 5px; }
.shot { margin: 32px 0 0 26px; width: 823px; font-family: "Liberation Sans", Arial, sans-serif; letter-spacing: 0; }
.shot .crumb { letter-spacing: .05px; }
.shot h2 { margin-top: 44px; font-size: 23.300px; height: 30px; line-height: 30px; }
.shot .selects { margin: 2px 0 21px; }
.shot .select { width: 266px; height: 22px; font-size: 15.500px; padding: 0 7px 0 5px; }
.shot .select.focus { width: 822px; height: 23px; }
.shot .options ul { font-size: 15.500px; }
.shot .options { height: 360px; }
.shot li { height: 19.650px; line-height: 19.650px; padding-left: 22px; }
.shot .grp { padding-left: 7px; }
.shot .sb { width: 18px; padding-top: 9px; justify-content: flex-start; }
.shot .sb b { width: 14px; height: 64px; margin-top: 6px; }

.status { height: 21px; background: #f1f1f1; display: flex; align-items: center; padding-left: 7px; color: #555; letter-spacing: -.45px; }
.s1 { width: 100px; }
.s2 { width: 89px; }
.s3 { margin-right: 17px; }
.views { margin-left: auto; }
.zoomer { margin-left: -14px; }
.pct { width: 50px; padding-left: 15px; }
```
